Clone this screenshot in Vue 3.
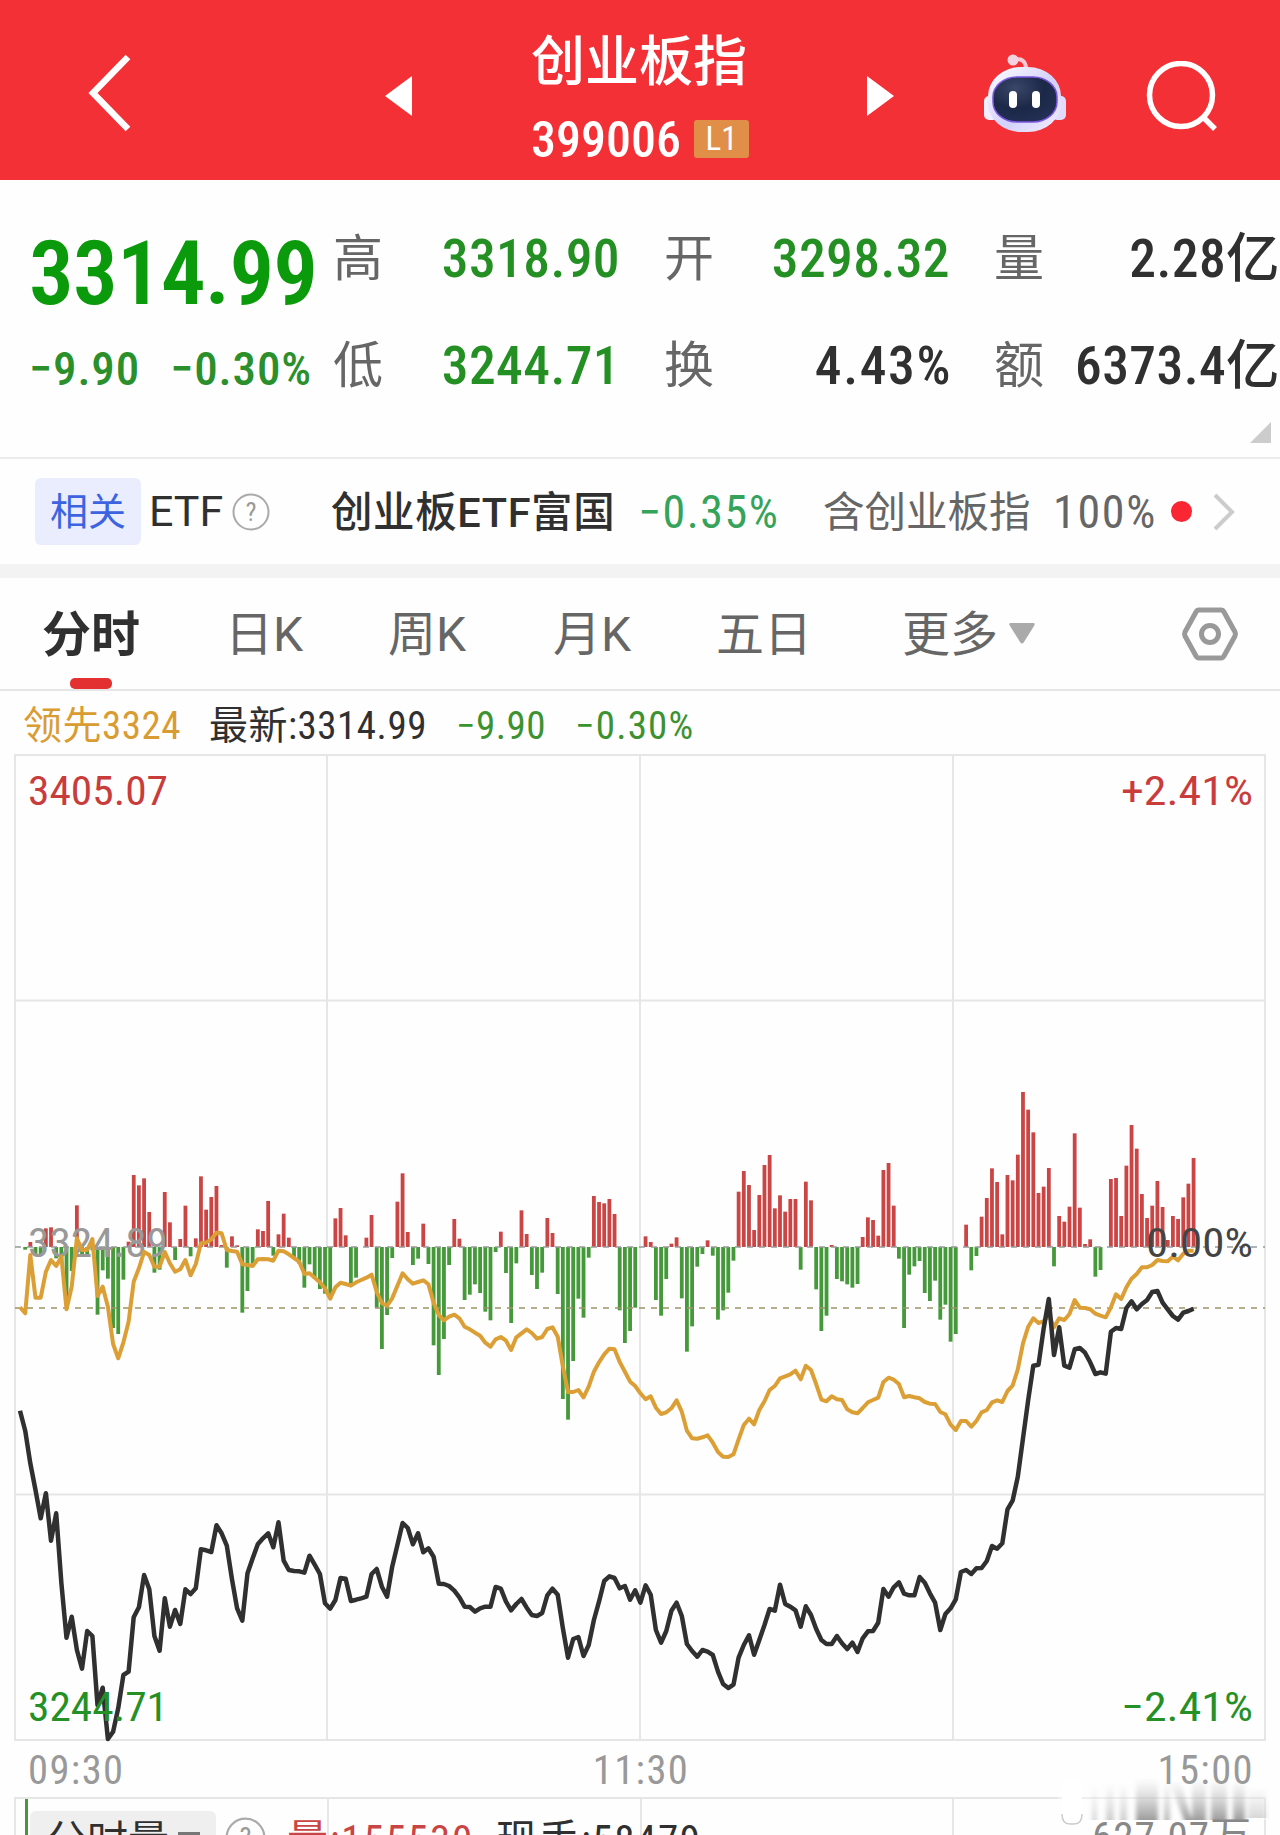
<template>
  <div class="page">
    <header class="top-bar">
      <svg class="back" viewBox="0 0 44 80"><path d="M40 4 5 40l35 36" /></svg>
      <svg class="arrow" viewBox="0 0 27 40"><path d="M27 0v40L0 20z" /></svg>
      <div class="title-box">
        <h1 class="title">创业板指</h1>
        <div class="code-row">
          <span class="code">399006</span>
          <span class="level">L1</span>
        </div>
      </div>
      <svg class="arrow" viewBox="0 0 27 40"><path d="M0 0v40l27-20z" /></svg>
      <svg class="robot" viewBox="0 0 86 80">
        <defs>
          <linearGradient id="shell" x1="0" y1="0" x2="1" y2="1">
            <stop offset="0" stop-color="#fff" />
            <stop offset="0.55" stop-color="#d3d0fa" />
            <stop offset="1" stop-color="#f4efff" />
          </linearGradient>
          <radialGradient id="visor" cx="0.35" cy="0.25" r="0.9">
            <stop offset="0" stop-color="#3a4768" />
            <stop offset="0.5" stop-color="#1c2848" />
            <stop offset="1" stop-color="#253257" />
          </radialGradient>
        </defs>
        <path d="M32 7q11-3 12 8" fill="none" stroke="#fbc9d3" stroke-width="4" />
        <circle cx="31" cy="7" r="5.5" fill="#f3d3e2" />
        <rect x="2" y="43" width="14" height="24" rx="5" fill="#f3eefd" />
        <rect x="70" y="43" width="14" height="24" rx="5" fill="#e2dcfa" />
        <rect x="6" y="14" width="73" height="65" rx="33" ry="29" fill="url(#shell)" />
        <rect x="11" y="24" width="64" height="45" rx="24" ry="20" fill="url(#visor)" stroke="#7a55dd" stroke-width="1.5" />
        <rect x="27" y="38" width="8" height="17" rx="4" fill="#fff" />
        <rect x="50" y="38" width="8" height="17" rx="4" fill="#fff" />
      </svg>
      <svg class="search" viewBox="0 0 74 72"><circle cx="35" cy="34" r="31.5" /><path d="m57 56 12 12" /></svg>
    </header>

    <section class="quote">
      <div class="last">
        <div class="last-price">3314.99</div>
        <div class="last-change"><span>−9.90</span><span>−0.30%</span></div>
      </div>
      <div class="stats">
        <template v-for="item in stats" :key="item.label">
          <span class="stat-label">{{ item.label }}</span>
          <span class="stat-value" :class="{ green: item.down, wide: item.wide }">{{ item.value }}</span>
        </template>
      </div>
      <span class="corner"></span>
    </section>

    <section class="etf-row">
      <span class="tag">相关</span>
      <span class="etf">ETF</span>
      <svg class="help" viewBox="0 0 38 38"><circle cx="19" cy="19" r="17.5" /><text x="19" y="28">?</text></svg>
      <span class="etf-name">创业板ETF富国</span>
      <span class="etf-change">−0.35%</span>
      <span class="etf-include">含创业板指</span>
      <span class="etf-percent">100%</span>
      <i class="dot"></i>
      <svg class="more" viewBox="0 0 24 40"><path d="m3 3 17 17L3 37" /></svg>
    </section>

    <nav class="tabs">
      <button
        v-for="tab in tabs"
        :key="tab"
        class="tab"
        :class="{ active: tab === currentTab }"
        @click="currentTab = tab"
      >{{ tab }}</button>
      <svg class="caret" viewBox="0 0 26 21"><path d="M2 0h22q3 0 1 3L15 19q-2 3-4 0L1 3Q-1 0 2 0z" /></svg>
      <svg class="settings" viewBox="0 0 58 54">
        <path d="M18 3h22q2 0 3 2l11 20q1 2 0 4L43 49q-1 2-3 2H18q-2 0-3-2L4 29q-1-2 0-4L15 5q1-2 3-2z" />
        <circle cx="29" cy="27" r="8.5" />
      </svg>
    </nav>

    <div class="info">
      <span class="lead">领先3324</span>
      <span class="newest">最新:3314.99</span>
      <span class="info-change">−9.90</span>
      <span class="info-percent">−0.30%</span>
    </div>

    <svg class="chart" viewBox="0 754 1280 990">
      <g class="grid">
        <rect x="15" y="755" width="1250" height="985" />
        <path d="M327 755v985M640 755v985M953 755v985M15 1000.500h1250M15 1494.500h1250" />
      </g>
      <rect
        v-for="bar in bars"
        :key="bar.x"
        :x="bar.x"
        :y="bar.y"
        :height="bar.h"
        :fill="bar.fill"
        width="3.8"
      />
      <path class="base-line" :d="`M15 ${BASE}H1265`" />
      <path class="now-line" d="M15 1308H1265" />
      <text class="axis gray" x="28" y="1257" textLength="140" lengthAdjust="spacingAndGlyphs">3324.89</text>
      <polyline class="avg" :points="avgPoints" />
      <polyline class="price" :points="pricePoints" />
      <text class="axis red" x="28" y="805" textLength="140" lengthAdjust="spacingAndGlyphs">3405.07</text>
      <text class="axis red" x="1121" y="805" textLength="132" lengthAdjust="spacingAndGlyphs">+2.41%</text>
      <text class="axis dark" x="1146" y="1257" textLength="107" lengthAdjust="spacingAndGlyphs">0.00%</text>
      <text class="axis down" x="28" y="1721" textLength="140" lengthAdjust="spacingAndGlyphs">3244.71</text>
      <text class="axis down" x="1121" y="1721" textLength="132" lengthAdjust="spacingAndGlyphs">−2.41%</text>
    </svg>

    <div class="times"><span>09:30</span><span>11:30</span><span>15:00</span></div>

    <section class="volume">
      <div class="volume-tag">分时量<i></i></div>
      <svg class="help volume-help" viewBox="0 0 38 38"><circle cx="19" cy="19" r="17.500" /><text x="19" y="28">?</text></svg>
      <span class="volume-total">量:155530</span>
      <span class="volume-now">现手:58479</span>
      <span class="volume-max">627.07万</span>
    </section>

    <svg class="smudge" viewBox="0 0 212 52">
      <defs>
        <linearGradient id="fade" x1="0" y1="0" x2="0" y2="1">
          <stop offset="0" stop-color="#bbb" stop-opacity="0" />
          <stop offset="1" stop-color="#8c8c8c" stop-opacity="0.85" />
        </linearGradient>
        <filter id="soft"><feGaussianBlur stdDeviation="2 0.500" /></filter>
      </defs>
      <rect x="0" y="6" width="212" height="36" fill="#fff" opacity="0.35" />
      <g fill="url(#fade)" filter="url(#soft)">
        <rect x="34" y="6" width="5" height="36" opacity="0.4" />
        <rect x="48" y="4" width="8" height="38" opacity="0.5" />
        <rect x="62" y="4" width="7" height="38" opacity="0.5" />
        <rect x="78" y="0" width="22" height="42" />
        <rect x="106" y="2" width="6" height="40" opacity="0.7" />
        <path d="M112 4l14 38h8L122 2z" />
        <rect x="134" y="0" width="14" height="42" />
        <rect x="153" y="0" width="16" height="42" />
        <rect x="175" y="2" width="12" height="40" />
        <rect x="190" y="8" width="18" height="32" opacity="0.4" />
      </g>
      <path d="M4 0v38q0 8 8 8h4q8 0 8-8V0z" fill="#fff" />
      <path d="M4 36q0 10 8 10h4q8 0 8-10" fill="none" stroke="#ccc" stroke-width="1.500" />
    </svg>
  </div>
</template>

<script setup>
import { ref } from 'vue';

const stats = [
  { label: '高', value: '3318.90', down: true },
  { label: '开', value: '3298.32', down: true },
  { label: '量', value: '2.28亿' },
  { label: '低', value: '3244.71', down: true },
  { label: '换', value: '4.43%', wide: true },
  { label: '额', value: '6373.4亿' }
];

const tabs = ['分时', '日K', '周K', '月K', '五日', '更多'];
const currentTab = ref('分时');

// y of the previous close, x step of one minute
const BASE = 1247;
const STEP = 5.17;
const SCALE = 3;

const momentum = [
  0, -8, 15, -24, -24, 56, 59, -34, -39, -170, -72, 125, -30, -30, -10, -203, -70, -95, -243, -261,
  -98, 16, 216, 185, 206, 105, -77, -68, 165, 74, -39, 24, 124, -28, 26, 212, 112, 150, 183, 6,
  -62, 32, 5, -197, -132, -50, 53, 48, 138, -26, 38, 100, 28, -35, -50, -122, -52, -95, -126, -140,
  -155, 86, 117, 35, -110, -92, 0, 28, 96, -182, -306, -204, -33, 136, 221, 45, -54, -35, 70, -51,
  -295, -384, -276, -54, 84, 25, -159, -143, -112, -138, -194, -220, -15, 46, -78, -228, -49, 110, 39, -84,
  -126, -77, 87, 42, -141, -456, -518, -342, -155, -212, -32, 153, 135, 131, 144, 99, -190, -288, -252, -182,
  0, 32, 15, -159, -206, -96, 10, 29, -154, -314, -238, -59, -21, 20, -26, -218, -190, -137, -41, 166,
  228, 186, 51, 156, 246, 276, 116, 155, 106, 144, 144, -68, 196, 140, -127, -252, -206, 6, -96, -103,
  -112, -122, -111, 30, 89, 81, 34, 231, 252, 124, -35, -243, -83, -58, -42, -138, -162, -101, -218, -173,
  -284, -261, 0, 67, -70, -27, 91, 147, 236, 195, 38, 216, 200, 277, 465, 412, 344, 162, 181, 237,
  -58, 93, 76, 121, 341, 118, 9, 23, -89, -69, 0, 204, 207, 93, 244, 366, 295, 159, 87, 124,
  198, 120, 21, 93, 84, 149, 190, 267
];

// distance below the previous close
const average = [
  181, 199, 24, 152, 152, 74, 39, 57, 29, 187, 119, -26, 9, 9, -24, 147, 119, 179, 291, 334,
  286, 224, 104, 64, 15, 24, 59, 59, 15, 49, 74, 67, 39, 85, 51, -11, -13, -23, -43, -41,
  9, 12, 14, 52, 54, 57, 37, 36, 37, 41, 11, 13, 22, 33, 44, 81, 79, 92, 106, 124,
  155, 121, 107, 111, 116, 106, 99, 92, 83, 134, 169, 176, 154, 116, 79, 97, 110, 105, 100, 112,
  167, 204, 220, 209, 203, 214, 239, 247, 257, 266, 287, 299, 277, 270, 281, 309, 271, 259, 247, 258,
  275, 270, 246, 241, 269, 359, 435, 435, 429, 451, 419, 374, 346, 322, 305, 307, 345, 374, 404, 417,
  439, 457, 448, 482, 501, 496, 484, 460, 494, 551, 574, 575, 571, 565, 587, 615, 629, 630, 622, 577,
  534, 515, 532, 489, 463, 429, 417, 394, 388, 382, 371, 397, 356, 369, 412, 458, 463, 448, 457, 459,
  487, 496, 499, 483, 466, 459, 452, 405, 392, 398, 411, 451, 447, 451, 454, 465, 470, 471, 495, 502,
  533, 549, 522, 522, 539, 522, 496, 489, 466, 460, 465, 432, 416, 367, 289, 239, 214, 228, 223, 204,
  241, 214, 219, 201, 159, 182, 183, 187, 200, 206, 211, 181, 142, 156, 121, 95, 81, 61, 61, 54,
  39, 42, 43, 29, 40, 20, 11, 11
];

const price = [
  491, 551, 649, 729, 814, 739, 881, 799, 1009, 1172, 1109, 1209, 1265, 1152, 1167, 1374, 1322, 1476, 1454, 1384,
  1284, 1274, 1111, 1081, 984, 1027, 1167, 1211, 1054, 1139, 1089, 1131, 1027, 1041, 1024, 907, 910, 915, 835, 859,
  896, 997, 1084, 1121, 979, 934, 892, 874, 859, 901, 826, 941, 969, 972, 973, 977, 926, 953, 981, 1069,
  1085, 1059, 993, 995, 1062, 1058, 1054, 1049, 981, 966, 1019, 1049, 959, 894, 828, 843, 892, 859, 916, 904,
  929, 1010, 1011, 1017, 1031, 1051, 1079, 1080, 1094, 1084, 1079, 1079, 1020, 1025, 1064, 1090, 1071, 1056, 1082, 1104,
  1107, 1098, 1045, 1025, 1043, 1144, 1232, 1176, 1170, 1227, 1194, 1119, 1064, 1002, 988, 993, 1024, 1017, 1058, 1030,
  1067, 1015, 1043, 1149, 1187, 1152, 1091, 1067, 1107, 1191, 1212, 1229, 1209, 1214, 1224, 1274, 1311, 1323, 1313, 1232,
  1194, 1165, 1223, 1179, 1134, 1086, 1091, 1013, 1071, 1079, 1090, 1139, 1078, 1104, 1146, 1179, 1191, 1191, 1167, 1189,
  1206, 1187, 1215, 1174, 1153, 1152, 1127, 1026, 1049, 1021, 1006, 1040, 1045, 1045, 990, 1007, 1039, 1067, 1149, 1101,
  1084, 1057, 975, 969, 981, 964, 963, 942, 897, 905, 889, 787, 761, 689, 574, 459, 356, 353, 244, 156,
  324, 241, 356, 362, 307, 303, 317, 346, 381, 376, 380, 254, 243, 246, 183, 163, 187, 171, 159, 135,
  132, 167, 187, 207, 218, 197, 192, 185
];

const toX = (i) => 20 + i * STEP;

const toPoints = (list) =>
  list.map((value, i) => `${toX(i).toFixed(1)},${(BASE + value / SCALE).toFixed(1)}`).join(' ');

const bars = momentum.map((value, i) => ({
  x: toX(i) - 1.9,
  y: value > 0 ? BASE - value / SCALE : BASE,
  h: Math.abs(value) / SCALE,
  fill: value > 0 ? '#cc4545' : '#45993a'
}));

const avgPoints = toPoints(average);
const pricePoints = toPoints(price);
</script>

<style>
body {
  background: #fff;
  overflow: hidden;
}
</style>

<style scoped>
.page {
  position: relative;
  width: 1280px;
  height: 1835px;
  overflow: hidden;
  background: #fefefe;
  color: #303030;
  font-family: Roboto, "Noto Sans CJK SC", sans-serif;
  font-stretch: 75%;
  line-height: 1;
  white-space: nowrap;
}

svg {
  display: block;
  flex: none;
}

.top-bar {
  display: flex;
  align-items: center;
  height: 180px;
  box-sizing: border-box;
  padding-top: 6px;
  background: #f23036;
}

.back {
  width: 44px;
  height: 80px;
  margin-left: 88px;
  fill: none;
  stroke: #fff;
  stroke-width: 6.5;
}

.arrow {
  width: 27px;
  height: 40px;
  margin-top: 6px;
  fill: #fff;
}

.back + .arrow {
  margin-left: 253px;
}

.title-box {
  width: 218px;
  margin: 15px 118px 0 119px;
}

.title {
  margin: 0;
  font-size: 54px;
  font-weight: 500;
  color: #fff;
}

.code-row {
  display: flex;
  align-items: center;
  margin-top: 25px;
}

.code {
  width: 163px;
  font-size: 50px;
  font-weight: 500;
  color: #fff;
}

.level {
  width: 55px;
  height: 38px;
  margin-top: -3px;
  border-radius: 3px;
  background: #e18e48;
  color: #fff;
  font-size: 33px;
  line-height: 38px;
  text-align: center;
}

.robot {
  width: 86px;
  height: 80px;
  margin: 0 0 0 88px;
}

.search {
  width: 74px;
  height: 72px;
  margin-left: 78px;
  margin-top: 8px;
  fill: none;
  stroke: #fff;
  stroke-width: 5.5;
}

.quote {
  position: relative;
  display: flex;
  height: 277px;
  border-bottom: 2px solid #ebebeb;
}

.last {
  width: 333px;
  box-sizing: border-box;
  padding: 49px 0 0 29px;
}

.last-price {
  font-size: 89px;
  font-weight: 600;
  letter-spacing: -0.8px;
  color: #0b9a0b;
}

.last-change {
  display: flex;
  gap: 30px;
  margin-top: 27px;
  font-size: 47px;
  font-weight: 500;
  letter-spacing: 0.9px;
  color: #2b902b;
}

.stats {
  display: grid;
  grid-template-columns: 50px 281px 50px 280px 50px 236px;
  grid-auto-rows: 107px;
  align-items: center;
  align-content: start;
  width: 947px;
  padding-top: 25px;
}

.stat-label {
  font-size: 50px;
  color: #666;
}

.stat-value {
  padding-right: 44px;
  font-size: 53.5px;
  font-weight: 500;
  letter-spacing: 0.4px;
  text-align: right;
}

.stat-value:nth-child(6n) {
  padding-right: 0;
}

.stat-value.wide {
  padding-right: 42px;
  letter-spacing: 1.6px;
}

.green {
  color: #249024;
}

.corner {
  position: absolute;
  right: 9px;
  bottom: 14px;
  border-left: 21px solid transparent;
  border-bottom: 21px solid #ccc;
}

.etf-row {
  display: flex;
  align-items: center;
  height: 105px;
  border-bottom: 14px solid #f3f3f3;
}

.tag {
  width: 106px;
  height: 67px;
  margin-left: 35px;
  border-radius: 6px;
  background: #e9edfd;
  color: #3d64e0;
  font-size: 38px;
  line-height: 69px;
  text-align: center;
}

.etf {
  width: 83px;
  margin-left: 8px;
  font-size: 43px;
  font-stretch: 100%;
}

.help {
  width: 38px;
  height: 38px;
}

.help circle {
  fill: none;
  stroke: #aaa;
  stroke-width: 2;
}

.help text {
  fill: #999;
  font-size: 26px;
  text-anchor: middle;
}

.etf-name {
  width: 307px;
  margin-left: 61px;
  padding-top: 3px;
  font-size: 41.5px;
  font-weight: 500;
  font-stretch: 100%;
  letter-spacing: 0.6px;
}

.etf-change {
  width: 185px;
  font-size: 46px;
  letter-spacing: 1.5px;
  color: #35a35a;
}

.etf-include {
  width: 230px;
  padding-top: 3px;
  font-size: 41.5px;
  color: #666;
}

.etf-percent {
  width: 118px;
  font-size: 46px;
  letter-spacing: 1.7px;
  color: #666;
}

.dot {
  width: 21px;
  height: 21px;
  border-radius: 50%;
  background: #fb2633;
}

.more {
  width: 24px;
  height: 40px;
  margin-left: 20px;
  fill: none;
  stroke: #ccc;
  stroke-width: 4;
}

.tabs {
  display: flex;
  align-items: center;
  height: 111px;
  border-bottom: 2px solid #e6e6e6;
}

.tab {
  position: relative;
  flex: none;
  box-sizing: border-box;
  height: 111px;
  margin: 0;
  padding: 3px 0 0;
  border: 0;
  background: none;
  color: #666;
  font: inherit;
  font-size: 48px;
  font-stretch: 100%;
  text-align: left;
}

.tab:nth-child(1) { width: 225px; padding-left: 42px; }
.tab:nth-child(2) { width: 163px; }
.tab:nth-child(3) { width: 165px; }
.tab:nth-child(4) { width: 163px; }
.tab:nth-child(5) { width: 186px; }
.tab:nth-child(6) { width: 107px; }

.tab.active {
  color: #303030;
  font-size: 49px;
  font-weight: 700;
}

.tab.active::after {
  content: "";
  position: absolute;
  left: 70px;
  bottom: 0;
  width: 42px;
  height: 11px;
  border-radius: 5px;
  background: #e33030;
}

.caret {
  width: 26px;
  height: 21px;
  fill: #aaa;
}

.settings {
  width: 58px;
  height: 54px;
  margin-left: 146px;
  fill: none;
  stroke: #999;
  stroke-width: 5;
}

.info {
  display: flex;
  align-items: center;
  height: 63px;
  padding: 7px 0 0 23px;
  box-sizing: border-box;
  font-size: 39px;
  letter-spacing: 0.5px;
}

.lead {
  width: 186px;
  color: #d99c33;
}

.newest {
  width: 247px;
}

.info-change {
  width: 119px;
}

.info-change,
.info-percent {
  color: #3d9230;
}

.info-percent {
  letter-spacing: 1.2px;
}

.chart {
  width: 1280px;
  height: 990px;
}

.grid {
  fill: none;
  stroke: #e6e6e6;
  stroke-width: 2;
}

.base-line,
.now-line {
  fill: none;
  stroke: #999;
  stroke-width: 1.5;
  stroke-dasharray: 6 6;
}

.now-line {
  stroke: #9c9468;
}

.avg,
.price {
  fill: none;
  stroke: #dc9f35;
  stroke-width: 4;
  stroke-linejoin: round;
}

.price {
  stroke: #303030;
  stroke-width: 4.5;
}

.axis {
  font-size: 40px;
  font-weight: 400;
}

.axis.gray { fill: #999; }
.axis.red { fill: #c93c3c; }
.axis.dark { fill: #444; }
.axis.down { fill: #259025; }

.times {
  display: flex;
  align-items: center;
  justify-content: space-between;
  height: 53px;
  padding: 0 26px 0 28px;
  font-size: 40.5px;
  letter-spacing: 1.4px;
  color: #999;
}

.volume {
  display: flex;
  height: 60px;
  margin-left: 14px;
  margin-right: 14px;
  border: 2px solid #e6e6e6;
  background:
    linear-gradient(#45993a, #45993a) 9px 0 / 3px 100% no-repeat,
    linear-gradient(#e6e6e6, #e6e6e6) 311px 0 / 2px 100% no-repeat,
    linear-gradient(#e6e6e6, #e6e6e6) 624px 0 / 2px 100% no-repeat,
    linear-gradient(#e6e6e6, #e6e6e6) 936px 0 / 2px 100% no-repeat;
  font-size: 41px;
}

.volume-tag {
  display: flex;
  width: 170px;
  height: 60px;
  margin: 12px 0 0 14px;
  padding: 10px 0 0 16px;
  border-radius: 6px;
  background: #efefef;
}

.volume-tag i {
  width: 22px;
  height: 4px;
  margin: 11px 0 0 9px;
  background: #777;
}

.volume-help {
  width: 41px;
  height: 41px;
  margin: 18px 0 0 9px;
}

.volume-total,
.volume-now,
.volume-max {
  margin-top: 21px;
}

.volume-total {
  width: 209px;
  margin-left: 21px;
  color: #c94444;
  letter-spacing: 1.9px;
}

.volume-now {
  width: 596px;
  letter-spacing: 1.6px;
}

.volume-max {
  margin-top: 18px;
  letter-spacing: 1px;
  color: #888;
}

.smudge {
  position: absolute;
  left: 1058px;
  top: 1778px;
  width: 212px;
  height: 52px;
}
</style>
